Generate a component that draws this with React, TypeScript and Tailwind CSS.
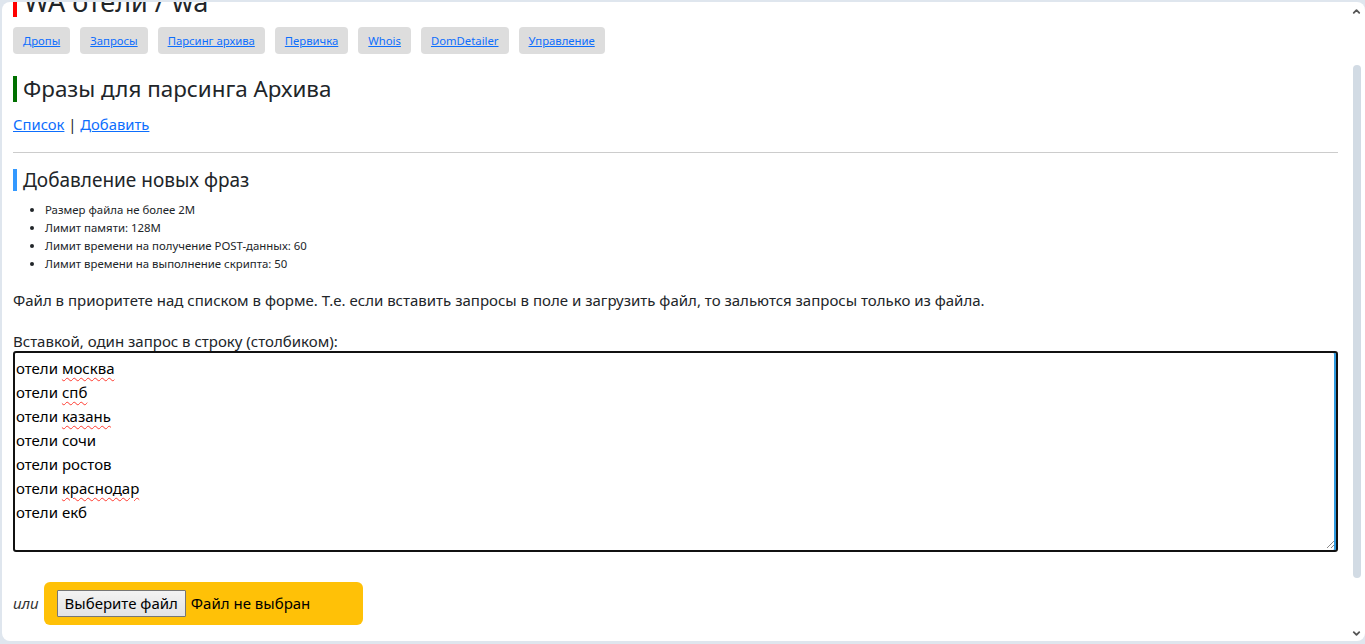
import { ChevronUp, ChevronDown } from 'lucide-react';

const navItems = ['Дропы', 'Запросы', 'Парсинг архива', 'Первичка', 'Whois', 'DomDetailer', 'Управление'];

const limits = [
  'Размер файла не более 2M',
  'Лимит памяти: 128M',
  'Лимит времени на получение POST-данных: 60',
  'Лимит времени на выполнение скрипта: 50',
];

// second word of each line; true = spell-check squiggle
const phrases: [string, boolean][] = [
  ['москва', true],
  ['спб', true],
  ['казань', true],
  ['сочи', false],
  ['ростов', false],
  ['краснодар', true],
  ['екб', false],
];

const font = { fontFamily: '"Noto Sans", "Open Sans", sans-serif' };

const App = () => {
  return (
    <div className="h-[644px] w-full bg-[#dfe6ee] pl-[2px] pt-[2px] pb-[3px] overflow-hidden" style={font}>
      <div className="relative h-full bg-white rounded-lg overflow-hidden text-[#212529]">
        <div className="pl-[11px] pr-[27px]">
          {/* page title, scrolled partly out of view */}
          <div className="flex items-center gap-[7px] -mt-[19px] h-[36px]">
            <span className="w-[4px] h-[32px] bg-[#ff0000]" />
            <span className="text-[27px] leading-none">WA отели / wa</span>
          </div>

          <div className="flex gap-[10px] mt-[8px]">
            {navItems.map((item) => (
              <div key={item} className="h-[27px] px-[10px] pt-[1px] flex items-center bg-[#dddddd] rounded-[4px]">
                <a href="#" className="text-[11.3px] text-[#0d6efd] underline">
                  {item}
                </a>
              </div>
            ))}
          </div>

          <div className="flex items-center gap-[6px] mt-[22px]">
            <span className="w-[4px] h-[26px] bg-[#007000]" />
            <h2 className="text-[22.4px] leading-none">Фразы для парсинга Архива</h2>
          </div>

          <div className="mt-[12px] text-[14.8px] leading-[20px]">
            <a href="#" className="text-[#0d6efd] underline">Список</a> |{' '}
            <a href="#" className="text-[#0d6efd] underline">Добавить</a>
          </div>

          <hr className="mt-[18px] border-t border-[#cccccc]" />

          <div className="flex items-center gap-[6px] mt-[16px]">
            <span className="w-[4px] h-[22px] bg-[#3399ff]" />
            <h3 className="text-[19px] leading-none">Добавление новых фраз</h3>
          </div>

          <ul className="mt-[10px] pl-[32px] list-disc text-[11.4px] leading-[18px]">
            {limits.map((l) => (
              <li key={l}>{l}</li>
            ))}
          </ul>

          <p className="mt-[17px] text-[15px] leading-[20px]">
            Файл в приоритете над списком в форме. Т.е. если вставить запросы в поле и загрузить файл, то зальются запросы только из файла.
          </p>

          <div className="mt-[21px] text-[15px] leading-[20px]">Вставкой, один запрос в строку (столбиком):</div>

          <div className="relative h-[201px] border-2 border-[#111111] rounded-[3px] px-[1px] pt-[3px] text-[15px] leading-[24px] text-black shadow-[inset_-2px_0_0_#2f9be0]">
            {phrases.map(([w, bad]) => (
              <div key={w}>
                отели{' '}
                <span className={bad ? 'underline decoration-wavy decoration-[#ff3b30] decoration-1 underline-offset-[3px]' : ''}>
                  {w}
                </span>
              </div>
            ))}
            <svg className="absolute right-[1px] bottom-[1px]" width="10" height="10" viewBox="0 0 10 10">
              <line x1="9" y1="2" x2="2" y2="9" stroke="#8a8a8a" strokeWidth="1" />
              <line x1="9" y1="6" x2="6" y2="9" stroke="#8a8a8a" strokeWidth="1" />
            </svg>
          </div>

          <div className="flex items-center gap-[5px] mt-[30px]">
            <span className="italic text-[15px] text-[#333]">или</span>
            <div className="w-[319px] h-[43px] bg-[#ffc107] rounded-[6px] flex items-center pl-[13px] gap-[5px]">
              <button className="h-[27px] px-[7px] border border-[#767676] bg-gradient-to-b from-[#f3f3f3] to-[#e3e3e3] rounded-[1px] text-[15px] text-black">
                Выберите файл
              </button>
              <span className="text-[15px] text-black">Файл не выбран</span>
            </div>
          </div>
        </div>

        {/* scrollbar */}
        <ChevronUp className="absolute right-[3px] top-[4px] w-[11px] h-[11px] text-[#555]" strokeWidth={4} />
        <div className="absolute right-[4px] top-[63px] w-[8px] h-[513px] rounded-full bg-[#d2dbe4]" />
        <ChevronDown className="absolute right-[3px] bottom-[2px] w-[11px] h-[11px] text-[#555]" strokeWidth={4} />
      </div>
    </div>
  );
};

export default App;
